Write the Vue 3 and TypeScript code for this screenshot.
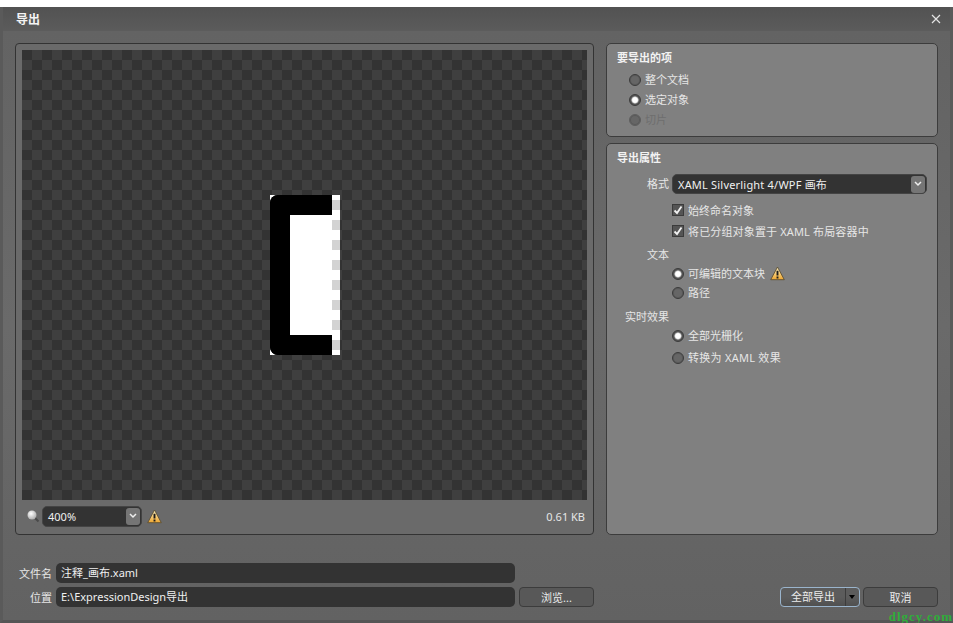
<template>
  <div class="screen">
    <div class="backdrop"></div>
    <div class="dialog">
      <div class="titlebar">
        <span class="title">导出</span>
        <svg class="close" width="10" height="10" viewBox="0 0 10 10">
          <path d="M1 1 L9 9 M9 1 L1 9" stroke="#e4e4e4" stroke-width="1.2" fill="none" />
        </svg>
      </div>

      <div class="content">
        <div class="columns">
          <section class="preview-panel">
            <div class="canvas">
              <div class="art">
                <div class="bracket"></div>
                <div class="strip"></div>
              </div>
            </div>
            <div class="preview-foot">
              <svg class="loupe" width="14" height="14" viewBox="0 0 14 14">
                <defs>
                  <radialGradient id="ball" cx="0.4" cy="0.35" r="0.7">
                    <stop offset="0" stop-color="#ffffff" />
                    <stop offset="1" stop-color="#a9a9a9" />
                  </radialGradient>
                </defs>
                <path d="M8 8 L12.5 12.5" stroke="#4a4a4a" stroke-width="2" />
                <circle cx="6" cy="6" r="4.5" fill="url(#ball)" />
              </svg>
              <div class="combo zoom-combo">
                <span class="combo-text">400%</span>
                <span class="combo-btn">
                  <svg width="8" height="6" viewBox="0 0 8 6"><path d="M1 1 L4 4 L7 1" stroke="#eee" stroke-width="1.5" fill="none" /></svg>
                </span>
              </div>
              <svg class="warn" width="15" height="15" viewBox="0 0 15 15">
                <defs>
                  <linearGradient id="warnA" x1="0" y1="0" x2="0" y2="1">
                    <stop offset="0" stop-color="#fff4c4" />
                    <stop offset="1" stop-color="#eda52e" />
                  </linearGradient>
                </defs>
                <path d="M7.5 1 L14.3 13.7 L0.7 13.7 Z" fill="url(#warnA)" stroke="#5c4f33" stroke-width="0.9" stroke-linejoin="round" />
                <path d="M7.5 4.8 V9.6 M7.5 10.6 V12.4" stroke="#1c1c1c" stroke-width="1.9" />
              </svg>
              <span class="size">0.61 KB</span>
            </div>
          </section>

          <div class="side">
            <section class="panel scope-panel">
              <h3>要导出的项</h3>
              <div class="scope-list">
                <label v-for="item in scopes" :key="item.text" class="radio-row" :class="{ disabled: item.disabled }">
                  <span class="radio" :class="{ on: item.on }"></span>{{ item.text }}
                </label>
              </div>
            </section>

            <section class="panel props-panel">
              <h3>导出属性</h3>
              <div class="form">
                <span class="label">格式</span>
                <div class="combo format-combo">
                  <span class="combo-text spaced">XAML Silverlight 4/WPF 画布</span>
                  <span class="combo-btn">
                    <svg width="8" height="6" viewBox="0 0 8 6"><path d="M1 1 L4 4 L7 1" stroke="#eee" stroke-width="1.5" fill="none" /></svg>
                  </span>
                </div>

                <div class="checks">
                  <label class="check-row">
                    <span class="check">
                      <svg width="10" height="10" viewBox="0 0 10 10"><path d="M1.5 5.5 L4 8 L8.5 1.5" stroke="#f2f2f2" stroke-width="1.8" fill="none" /></svg>
                    </span>始终命名对象
                  </label>
                  <label class="check-row">
                    <span class="check">
                      <svg width="10" height="10" viewBox="0 0 10 10"><path d="M1.5 5.5 L4 8 L8.5 1.5" stroke="#f2f2f2" stroke-width="1.8" fill="none" /></svg>
                    </span><span class="wide">将已分组对象置于 XAML 布局容器中</span>
                  </label>
                </div>

                <span class="label text-label">文本</span>
                <div class="spacer"></div>
                <div></div>
                <div class="text-radios">
                  <label class="radio-row">
                    <span class="radio on"></span>可编辑的文本块
                    <svg class="warn inline-warn" width="15" height="15" viewBox="0 0 15 15">
                      <path d="M7.5 1 L14.3 13.7 L0.7 13.7 Z" fill="url(#warnA)" stroke="#5c4f33" stroke-width="0.9" stroke-linejoin="round" />
                      <path d="M7.5 4.8 V9.6 M7.5 10.6 V12.4" stroke="#1c1c1c" stroke-width="1.9" />
                    </svg>
                  </label>
                  <label class="radio-row"><span class="radio"></span>路径</label>
                </div>

                <span class="label effect-label">实时效果</span>
                <div class="spacer"></div>
                <div></div>
                <div class="effect-radios">
                  <label class="radio-row"><span class="radio on"></span>全部光栅化</label>
                  <label class="radio-row"><span class="radio"></span><span class="wider">转换为 XAML 效果</span></label>
                </div>
              </div>
            </section>
          </div>
        </div>

        <div class="footer">
          <div class="file-row">
            <span class="file-label">文件名</span>
            <div class="field">注释_画布.xaml</div>
            <div class="slot"></div>
          </div>
          <div class="file-row">
            <span class="file-label">位置</span>
            <div class="field">E:\ExpressionDesign导出</div>
            <button class="btn browse">浏览...</button>
            <div class="actions">
              <div class="btn split">
                <span class="split-main">全部导出</span>
                <span class="split-arrow"></span>
              </div>
              <button class="btn cancel">取消</button>
            </div>
          </div>
        </div>
      </div>
    </div>
    <span class="watermark">dlgcy.com</span>
  </div>
</template>

<script setup lang="ts">
const scopes = [
  { text: '整个文档', on: false, disabled: false },
  { text: '选定对象', on: true, disabled: false },
  { text: '切片', on: false, disabled: true },
];
</script>

<style>
html, body {
  margin: 0;
  background: #ffffff;
}
</style>

<style scoped>
.screen {
  position: relative;
  width: 953px;
  height: 623px;
  display: flex;
  flex-direction: column;
  overflow: hidden;
  font-family: "Noto Sans", "Noto Sans CJK SC", sans-serif;
  font-size: 11px;
  color: #e6e6e6;
}

.backdrop {
  height: 6px;
  margin-top: 1px;
  background: #ffffff;
  flex: none;
}

.dialog {
  flex: 1;
  display: flex;
  flex-direction: column;
  background: #666666;
  border-left: 3px solid #5a5a5a;
  border-right: 3px solid #5a5a5a;
  border-bottom: 3px solid #555555;
  min-height: 0;
}

.titlebar {
  height: 24px;
  flex: none;
  display: flex;
  align-items: center;
  justify-content: space-between;
  padding: 0 9px 0 13px;
  background: linear-gradient(#525252, #5b5b5b);
  border-bottom: 1px solid #5c5c5c;
  box-sizing: border-box;
}

.title {
  font-size: 12px;
  font-weight: 700;
  color: #f4f4f4;
}

.content {
  flex: 1;
  display: flex;
  flex-direction: column;
  padding: 12px 12px 10px;
  background: linear-gradient(#636363, #6a6a6a 50%, #626262);
  min-height: 0;
}

.columns {
  display: flex;
  gap: 12px;
  height: 492px;
  flex: none;
}

.preview-panel {
  width: 579px;
  box-sizing: border-box;
  border: 1px solid #333333;
  border-radius: 4px;
  padding: 6px 6px 0;
  display: flex;
  flex-direction: column;
  background: #6a6a6a;
}

.canvas {
  height: 450px;
  flex: none;
  display: flex;
  align-items: center;
  justify-content: center;
  background-color: #3f3f3f;
  background-image: conic-gradient(#333333 25%, transparent 0 50%, #333333 0 75%, transparent 0);
  background-size: 20px 20px;
  background-position: 10px 0;
}

.art {
  width: 70px;
  height: 160px;
  display: flex;
  background: #ffffff;
}

.bracket {
  flex: 1;
  box-sizing: border-box;
  border: 20px solid #000000;
  border-right: none;
  border-radius: 8px 0 0 8px;
  background: #ffffff;
}

.strip {
  width: 8px;
  margin: 5px 0;
  background: repeating-linear-gradient(#d3d3d3 0 10px, #ffffff 10px 20px);
}

.preview-foot {
  flex: 1;
  display: flex;
  align-items: center;
  padding: 0 2px 2px 4px;
}

.loupe {
  margin-right: 2px;
}

.combo {
  box-sizing: border-box;
  display: flex;
  align-items: center;
  justify-content: space-between;
  background: #333333;
  border-radius: 5px;
  height: 21px;
  padding: 1px;
  border: 1px solid #444444;
}

.zoom-combo {
  width: 100px;
  margin-right: 5px;
}

.format-combo {
  width: 255px;
  height: 20px;
}

.combo-text {
  padding-left: 4px;
  color: #f0f0f0;
}

.combo-text.spaced {
  letter-spacing: 0.2px;
}

.wide {
  letter-spacing: 0.15px;
}

.wider {
  letter-spacing: 0.27px;
}

.combo-btn {
  width: 14px;
  height: 17px;
  border-radius: 3px;
  background: #757575;
  display: flex;
  align-items: center;
  justify-content: center;
}

.size {
  margin-left: auto;
}

.side {
  flex: 1;
  display: flex;
  flex-direction: column;
  gap: 6px;
}

.panel {
  box-sizing: border-box;
  background: #808080;
  border: 1px solid #3c3c3c;
  border-radius: 5px;
}

.panel h3 {
  margin: 0;
  font-size: 11px;
  font-weight: 700;
  line-height: 16px;
  color: #f2f2f2;
}

.scope-panel {
  height: 94px;
  padding: 6px 10px 0;
}

.scope-list {
  margin: 5px 0 0 12px;
  display: flex;
  flex-direction: column;
  gap: 3px;
}

.radio-row {
  display: flex;
  align-items: center;
  height: 17px;
  line-height: 17px;
}

.radio {
  box-sizing: border-box;
  width: 12px;
  height: 12px;
  margin-right: 4px;
  border-radius: 50%;
  border: 1px solid #3b3b3b;
  background: #666666;
  box-shadow: inset 0 0 0 1px #5a5a5a;
  flex: none;
}

.radio.on {
  background: radial-gradient(circle, #ffffff 0 2.4px, #c4c4c4 3.2px, #555555 4px);
  box-shadow: none;
}

.radio-row.disabled {
  color: #6e6e6e;
}

.radio-row.disabled .radio {
  border-color: #5e5e5e;
}

.props-panel {
  flex: 1;
  padding: 6px 10px 0;
}

.form {
  display: grid;
  grid-template-columns: 52px 1fr;
  column-gap: 3px;
  margin: 8px 0 0 0;
  align-items: start;
}

.label {
  text-align: right;
  line-height: 20px;
  white-space: nowrap;
}

.checks {
  grid-column: 2;
  margin-top: 7px;
  display: flex;
  flex-direction: column;
  gap: 4px;
}

.check-row {
  display: flex;
  align-items: center;
  height: 17px;
}

.check {
  box-sizing: border-box;
  width: 12px;
  height: 12px;
  margin-right: 4px;
  background: #555555;
  border: 1px solid #3b3b3b;
  display: flex;
  align-items: center;
  justify-content: center;
  flex: none;
}

.text-label {
  margin-top: 6px;
}

.text-radios {
  margin-top: 0;
  display: flex;
  flex-direction: column;
  gap: 2px;
}

.inline-warn {
  margin-left: 5px;
}

.effect-label {
  margin-top: 6px;
}

.effect-radios {
  margin-top: 0;
  display: flex;
  flex-direction: column;
  gap: 5px;
}

.footer {
  margin-top: 28px;
  display: flex;
  flex-direction: column;
  gap: 4px;
}

.file-row {
  display: flex;
  align-items: center;
  height: 20px;
}

.file-label {
  width: 36px;
  margin-left: 1px;
  margin-right: 4px;
  text-align: right;
  white-space: nowrap;
}

.field {
  box-sizing: border-box;
  width: 459px;
  height: 20px;
  line-height: 19px;
  padding-left: 5px;
  border-radius: 5px;
  background: #333333;
  color: #f0f0f0;
}

.btn {
  box-sizing: border-box;
  height: 20px;
  border: 1px solid #3c3c3c;
  border-radius: 4px;
  background: #585858;
  color: #ececec;
  font: inherit;
  padding: 0;
}

.browse {
  width: 75px;
  margin-left: 4px;
}

.actions {
  margin-left: auto;
  display: flex;
  gap: 3px;
}

.split {
  width: 80px;
  display: flex;
  border-color: #9ab4cc;
  background: linear-gradient(#5c5c5c, #5c5c5c 50%, #505050);
}

.split-main {
  flex: 1;
  text-align: center;
  line-height: 18px;
  border-right: 1px solid #3c3c3c;
}

.split-arrow {
  width: 13px;
  position: relative;
}

.split-arrow::after {
  content: "";
  position: absolute;
  left: 3px;
  top: 7px;
  border: 3.5px solid transparent;
  border-top: 4px solid #000000;
}

.cancel {
  width: 75px;
}

.watermark {
  position: absolute;
  right: 0;
  bottom: 0;
  font-family: "Liberation Serif", serif;
  font-weight: 700;
  font-size: 13px;
  line-height: 13px;
  letter-spacing: 1px;
  color: #2fae3a;
}
</style>
